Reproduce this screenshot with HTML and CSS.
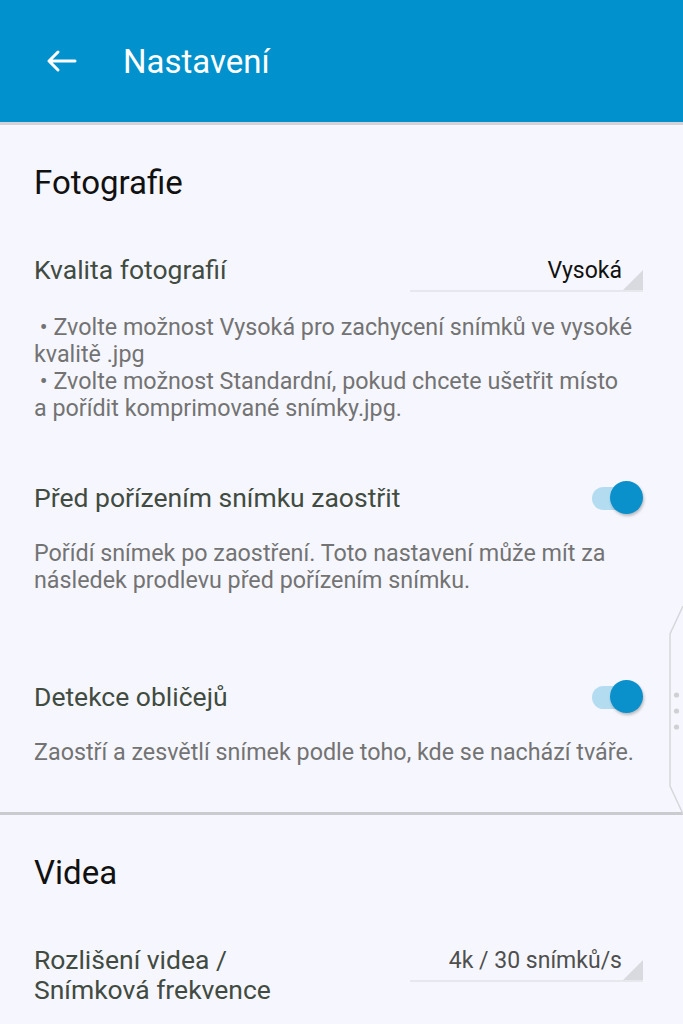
FILE: index.html
```html
<!DOCTYPE html>
<html lang="cs">
<head>
    <meta charset="UTF-8">
    <title>Nastavení</title>
    <link rel="stylesheet" href="styles.css">
</head>
<body>
    <header class="appbar">
        <svg class="back" width="32" height="24" viewBox="0 0 32 24">
            <path d="M30 12H4M13 3L4 12L13 21" fill="none" stroke="#fff" stroke-width="3" stroke-linecap="round" stroke-linejoin="round"/>
        </svg>
        <h1>Nastavení</h1>
    </header>

    <!-- Fotografie -->
    <section class="group">
        <h2>Fotografie</h2>

        <div class="row">
            <span class="label">Kvalita fotografií</span>
            <div class="dropdown">Vysoká</div>
        </div>
        <p class="desc">&nbsp;• Zvolte možnost Vysoká pro zachycení snímků ve vysoké kvalitě .jpg<br>&nbsp;• Zvolte možnost Standardní, pokud chcete ušetřit místo a&nbsp;pořídit komprimované snímky.jpg.</p>

        <div class="row toggle-row">
            <span class="label">Před pořízením snímku zaostřit</span>
            <div class="switch on"><span class="knob"></span></div>
        </div>
        <p class="desc">Pořídí snímek po zaostření. Toto nastavení může mít za následek prodlevu před pořízením snímku.</p>

        <div class="row toggle-row far">
            <span class="label">Detekce obličejů</span>
            <div class="switch on"><span class="knob"></span></div>
        </div>
        <p class="desc">Zaostří a zesvětlí snímek podle toho, kde se nachází tváře.</p>
    </section>

    <!-- Videa -->
    <section class="group">
        <h2>Videa</h2>

        <div class="row">
            <span class="label">Rozlišení videa /<br>Snímková frekvence</span>
            <div class="dropdown muted">4k / 30 snímků/s</div>
        </div>
    </section>

    <!-- edge panel handle -->
    <svg class="edge-handle" width="14" height="216" viewBox="0 0 14 216">
        <path d="M14 6L1 34V186L14 214" fill="none" stroke="#d6d7dc" stroke-width="1.5"/>
        <circle cx="7.5" cy="95" r="2.6" fill="#cfd0d4"/>
        <circle cx="7.5" cy="111" r="2.6" fill="#cfd0d4"/>
        <circle cx="7.5" cy="127" r="2.6" fill="#cfd0d4"/>
    </svg>
</body>
</html>
```

FILE: styles.css
```css
body {
    margin: 0;
    background-color: #f6f7fe;
    font-family: 'Roboto', 'Noto Sans', sans-serif;
    overflow: hidden;
    height: 1024px;
    position: relative;
}
.appbar {
    height: 125px;
    background-color: #0191cd;
    border-bottom: 3px solid #d2d4da;
    display: flex;
    align-items: center;
    box-sizing: border-box;
    padding-left: 45px;
}
.appbar .back {
    margin-right: 46px;
}
.appbar h1 {
    margin: 0;
    color: #fff;
    font-size: 33px;
    font-weight: 400;
}
.group {
    padding: 38px 40px 46px 34px;
    border-bottom: 3px solid #cacbcf;
}
.group:last-of-type {
    border-bottom: none;
}
h2 {
    margin: 0;
    font-size: 33px;
    font-weight: 400;
    line-height: 40px;
    color: #111;
}
.row {
    display: flex;
    justify-content: space-between;
    align-items: flex-start;
    margin-top: 49px;
}
.label {
    color: #414b41;
    font-size: 26.5px;
    line-height: 30px;
    margin-top: 3px;
}
.dropdown {
    position: relative;
    width: 233px;
    height: 40px;
    box-sizing: border-box;
    border-bottom: 2px solid #e7e8ee;
    text-align: right;
    padding-right: 21px;
    font-size: 23px;
    line-height: 38px;
    color: #111;
}
.dropdown::after {
    content: "";
    position: absolute;
    right: 0;
    bottom: 0;
    border-style: solid;
    border-width: 0 0 20px 20px;
    border-color: transparent transparent #d9dae0 transparent;
}
.dropdown.muted {
    color: #4f4f4f;
}
.desc {
    margin: 22px 0 0;
    color: #737373;
    font-size: 23.3px;
    line-height: 27px;
}
.toggle-row {
    align-items: center;
    height: 40px;
    margin-top: 56px;
}
.toggle-row .label {
    margin-top: 0;
}
.toggle-row.far {
    margin-top: 83px;
}
.switch {
    position: relative;
    width: 51px;
    height: 40px;
}
.switch::before {
    content: "";
    position: absolute;
    left: 0;
    top: 9px;
    width: 44px;
    height: 23px;
    border-radius: 12px;
    background-color: #b3dcf1;
}
.switch .knob {
    position: absolute;
    right: 0;
    top: 3px;
    width: 33px;
    height: 33px;
    border-radius: 50%;
    background-color: #0a90cb;
    box-shadow: 1px 2px 3px rgba(0, 0, 0, 0.25);
}
.edge-handle {
    position: absolute;
    right: 0;
    top: 600px;
}
```
